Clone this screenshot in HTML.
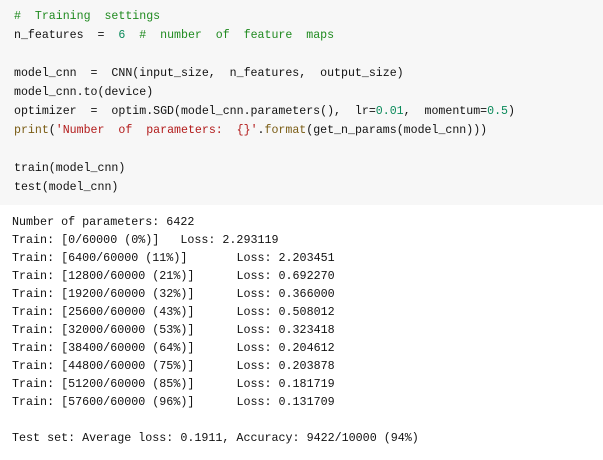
<!DOCTYPE html>
<html><head><meta charset="utf-8"><style>
html,body{margin:0;padding:0;width:603px;height:460px;background:#fff;overflow:hidden}
pre{margin:0;font-family:"Liberation Mono","Noto Sans CJK SC",monospace;font-size:11.6px;white-space:pre;tab-size:8;-moz-tab-size:8;color:#111}
#code{position:absolute;left:0;top:0;width:603px;height:205px;background:#f7f7f7}
#code pre{position:absolute;left:14px;top:7px;line-height:19px}
#out{position:absolute;left:12px;top:213px;line-height:18px;font-size:11.7px}
.c{color:#1f8a1f}.n{color:#0a8a5a}.s{color:#b21a1a}.b{color:#7a5c14}
</style></head><body>
<div id="code"><pre><span class="c">#  Training  settings</span>
n_features  =  <span class="n">6</span>  <span class="c">#  number  of  feature  maps</span>

model_cnn  =  CNN(input_size,  n_features,  output_size)
model_cnn.to(device)
optimizer  =  optim.SGD(model_cnn.parameters(),  lr=<span class="n">0.01</span>,  momentum=<span class="n">0.5</span>)
<span class="b">print</span>(<span class="s">'Number  of  parameters:  {}'</span>.<span class="b">format</span>(get_n_params(model_cnn)))

train(model_cnn)
test(model_cnn)</pre></div>
<pre id="out">Number of parameters: 6422
Train: [0/60000 (0%)]	Loss: 2.293119
Train: [6400/60000 (11%)]	Loss: 2.203451
Train: [12800/60000 (21%)]	Loss: 0.692270
Train: [19200/60000 (32%)]	Loss: 0.366000
Train: [25600/60000 (43%)]	Loss: 0.508012
Train: [32000/60000 (53%)]	Loss: 0.323418
Train: [38400/60000 (64%)]	Loss: 0.204612
Train: [44800/60000 (75%)]	Loss: 0.203878
Train: [51200/60000 (85%)]	Loss: 0.181719
Train: [57600/60000 (96%)]	Loss: 0.131709

Test set: Average loss: 0.1911, Accuracy: 9422/10000 (94%)</pre>
</body></html>
